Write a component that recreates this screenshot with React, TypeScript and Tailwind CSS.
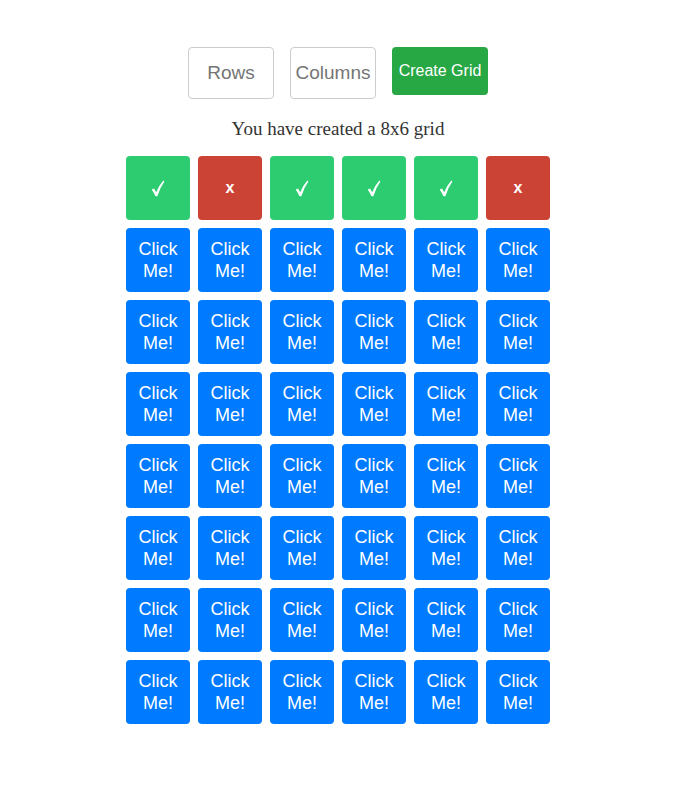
import React from 'react'

const ROWS = 8
const COLS = 6
const firstRow = ['ok', 'no', 'ok', 'ok', 'ok', 'no']

function Check(){
  return (
    <svg width="14" height="17" viewBox="0 0 14 17" fill="white">
      <path d="M0.8 9.6 L3 8.4 L5.2 12.2 Q8.2 5.2 12.4 0.6 L13.4 1.4 Q9 7.4 6.4 16.2 L4.6 16.2 Z"/>
    </svg>
  )
}

export default function App(){
  return (
    <div className="w-[676px] pt-[47px] pb-[40px] flex flex-col items-center" style={{fontFamily:'"Liberation Sans", Arial, sans-serif'}}>
      <div className="flex items-start gap-[16px]">
        <input placeholder="Rows" className="w-[86px] h-[52px] border border-[#ccc] rounded text-center text-[19px] placeholder:text-[#757575] outline-none"/>
        <input placeholder="Columns" className="w-[86px] h-[52px] border border-[#ccc] rounded text-center text-[19px] placeholder:text-[#757575] outline-none"/>
        <button className="w-[96px] h-[48px] bg-[#28a745] text-white text-[16px] rounded">Create Grid</button>
      </div>
      <p className="mt-[18px] text-[19px] text-[#333] leading-[24px]" style={{fontFamily:'"Liberation Serif", "Times New Roman", serif'}}>You have created a 8x6 grid</p>
      <div className="mt-[15px] grid grid-cols-6 gap-[8px]">
        {Array.from({length: ROWS}).map((_, r) =>
          Array.from({length: COLS}).map((_, c) => {
            if(r === 0){
              const ok = firstRow[c] === 'ok'
              return (
                <div key={r+'-'+c} className={'w-[64px] h-[64px] rounded flex items-center justify-center text-white font-bold text-[16px] ' + (ok ? 'bg-[#2ecc71]' : 'bg-[#cb4335]')}>
                  {ok ? <Check/> : 'x'}
                </div>
              )
            }
            return (
              <div key={r+'-'+c} className="w-[64px] h-[64px] rounded bg-[#007bff] text-white text-[18px] leading-[22px] flex items-center justify-center text-center">
                Click<br/>Me!
              </div>
            )
          })
        )}
      </div>
    </div>
  )
}
